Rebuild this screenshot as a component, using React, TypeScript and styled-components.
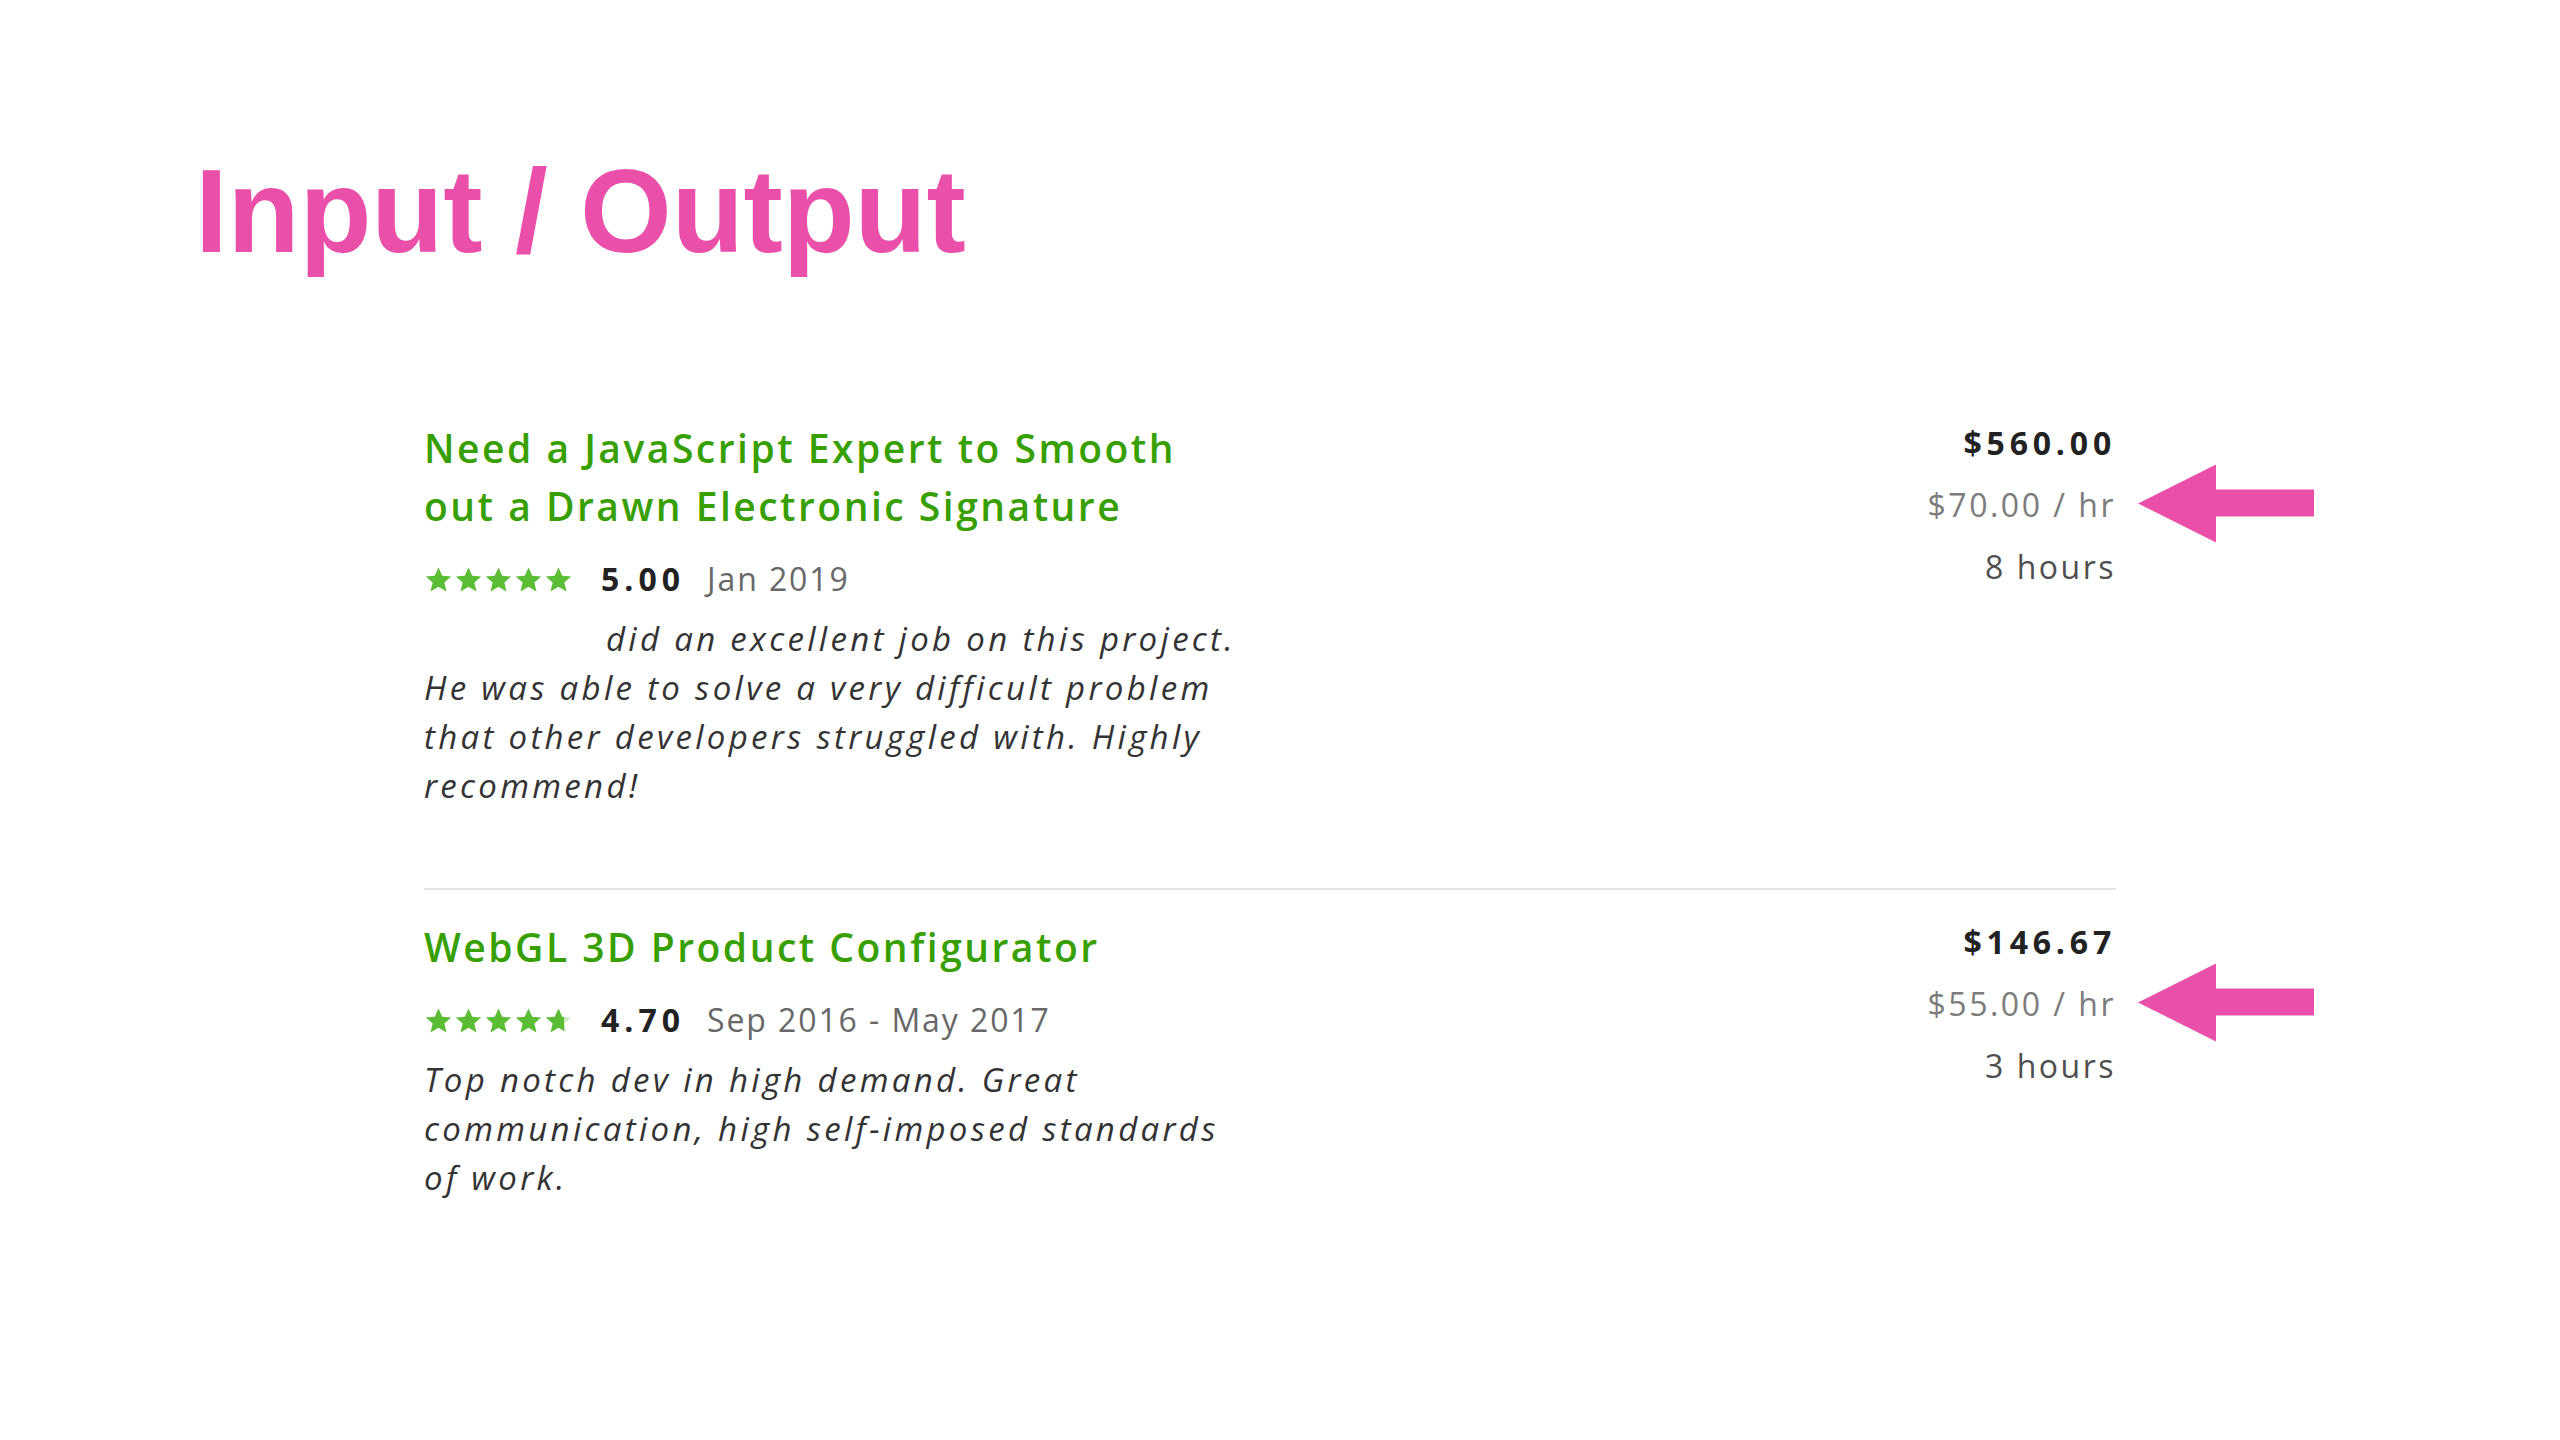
import React from "react";
import styled, { createGlobalStyle } from "styled-components";

const GlobalStyle = createGlobalStyle`
  body {
    margin: 0;
    background: #ffffff;
  }
`;

const PINK = "#ea4faa";
const STAR_GREEN = "#5bbd33";

type Job = {
  title: string[];
  rating: number;
  date: string;
  review: string[];
  indent?: number;
  total: string;
  rate: string;
  hours: string;
};

const jobs: Job[] = [
  {
    title: ["Need a JavaScript Expert to Smooth", "out a Drawn Electronic Signature"],
    rating: 5,
    date: "Jan 2019",
    review: [
      "did an excellent job on this project.",
      "He was able to solve a very difficult problem",
      "that other developers struggled with. Highly",
      "recommend!",
    ],
    indent: 182,
    total: "$560.00",
    rate: "$70.00 / hr",
    hours: "8 hours",
  },
  {
    title: ["WebGL 3D Product Configurator"],
    rating: 4.7,
    date: "Sep 2016 - May 2017",
    review: [
      "Top notch dev in high demand. Great",
      "communication, high self-imposed standards",
      "of work.",
    ],
    total: "$146.67",
    rate: "$55.00 / hr",
    hours: "3 hours",
  },
];

const Page = styled.div`
  min-height: 1440px;
  box-sizing: border-box;
  padding-top: 152px;
`;

const Heading = styled.h1`
  margin: 0 0 0 195px;
  font-family: "Liberation Sans", Arial, sans-serif;
  font-weight: 700;
  font-size: 118px;
  line-height: 1;
  letter-spacing: -0.2px;
  color: ${PINK};
`;

const List = styled.div`
  margin: 121px 0 0 424px;
  width: 1692px;
`;

const Item = styled.div`
  display: flex;
  justify-content: space-between;
  align-items: flex-start;
  padding: 28px 0 78px;

  & + & {
    border-top: 2px solid #e4e4e4;
  }
`;

const Main = styled.div`
  display: flex;
  flex-direction: column;
  font-family: "Open Sans", sans-serif;
`;

const Title = styled.div`
  font-size: 39px;
  line-height: 58px;
  font-weight: 600;
  letter-spacing: 2.5px;
  color: #37a000;
  white-space: nowrap;
`;

const Line = styled.span`
  display: block;
`;

const Meta = styled.div`
  display: flex;
  align-items: center;
  margin-top: 24px;
  height: 40px;
  font-size: 32px;
  line-height: 40px;
`;

const Stars = styled.div`
  display: flex;
  gap: 1px;
  margin-right: 28px;
`;

const Score = styled.span`
  font-weight: 700;
  color: #222222;
  letter-spacing: 5px;
  margin-right: 22px;
`;

const When = styled.span`
  color: #686868;
  letter-spacing: 1.9px;
`;

const Review = styled.div<{ $indent: number }>`
  margin-top: 15px;
  font-size: 33px;
  line-height: 49px;
  font-style: italic;
  font-weight: 500;
  letter-spacing: 3.3px;
  color: #333333;
  white-space: nowrap;

  ${Line}:first-child {
    padding-left: ${(p) => p.$indent}px;
  }
`;

const Side = styled.div`
  display: flex;
  flex-direction: column;
  align-items: flex-end;
  gap: 14px;
  font-family: "Open Sans", sans-serif;
  font-size: 32px;
  line-height: 48px;
`;

const Total = styled.div`
  font-weight: 700;
  color: #222222;
  letter-spacing: 4.8px;
`;

const Rate = styled.div`
  position: relative;
  color: #7c7c7c;
  letter-spacing: 2.5px;
`;

const Hours = styled.div`
  color: #4f4f4f;
  font-weight: 500;
  letter-spacing: 2.5px;
`;

const ArrowMark = styled.svg`
  position: absolute;
  left: calc(100% + 22px);
  top: 50%;
  transform: translateY(-52%);
`;

const STAR =
  "M12 1.2l3.2 7.1 7.6.7-5.8 5.1 1.8 7.6L12 17.7l-6.8 4 1.8-7.6L1.2 9l7.6-.7z";

const Star = ({ fill, id }: { fill: number; id: string }) => (
  <svg width="29" height="27" viewBox="0 0 24 23">
    <defs>
      <linearGradient id={id}>
        <stop offset={fill} stopColor={STAR_GREEN} />
        <stop offset={fill} stopColor="#cfeac0" />
      </linearGradient>
    </defs>
    <path d={STAR} fill={`url(#${id})`} />
  </svg>
);

const Arrow = () => (
  <ArrowMark width="176" height="78" viewBox="0 0 176 78">
    <polygon
      points="0,39 78,0 78,25 176,25 176,52 78,52 78,78"
      fill={PINK}
    />
  </ArrowMark>
);

const JobRow = ({ job, index }: { job: Job; index: number }) => (
  <Item>
    <Main>
      <Title>
        {job.title.map((t) => (
          <Line key={t}>{t}</Line>
        ))}
      </Title>
      <Meta>
        <Stars>
          {[0, 1, 2, 3, 4].map((i) => (
            <Star
              key={i}
              id={`star-${index}-${i}`}
              fill={Math.max(0, Math.min(1, job.rating - i))}
            />
          ))}
        </Stars>
        <Score>{job.rating.toFixed(2)}</Score>
        <When>{job.date}</When>
      </Meta>
      <Review $indent={job.indent ?? 0}>
        {job.review.map((r) => (
          <Line key={r}>{r}</Line>
        ))}
      </Review>
    </Main>
    <Side>
      <Total>{job.total}</Total>
      <Rate>
        {job.rate}
        <Arrow />
      </Rate>
      <Hours>{job.hours}</Hours>
    </Side>
  </Item>
);

export default function App() {
  return (
    <Page>
      <GlobalStyle />
      <Heading>Input / Output</Heading>
      <List>
        {jobs.map((job, i) => (
          <JobRow key={job.total} job={job} index={i} />
        ))}
      </List>
    </Page>
  );
}
